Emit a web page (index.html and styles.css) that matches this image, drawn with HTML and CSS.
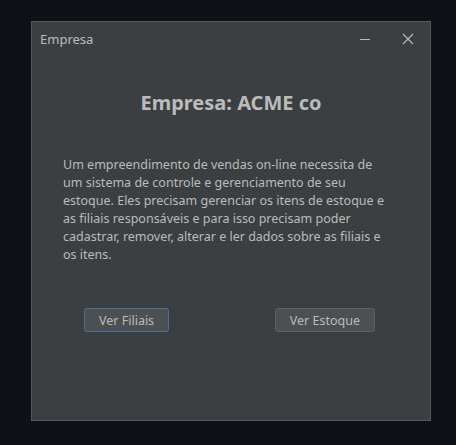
FILE: index.html
```html
<!DOCTYPE html>
<html lang="pt">
<head>
<meta charset="utf-8">
<title>Empresa</title>
<link rel="stylesheet" href="styles.css">
</head>
<body>
<div class="window">
  <div class="titlebar">
    <span class="title">Empresa</span>
    <div class="controls">
      <svg class="ctl" width="12" height="12" viewBox="0 0 12 12"><path d="M1 6.5H11" stroke="#bbbbbb" stroke-width="1"/></svg>
      <svg class="ctl" width="12" height="12" viewBox="0 0 12 12"><path d="M1 1L11 11M11 1L1 11" stroke="#bbbbbb" stroke-width="1.1"/></svg>
    </div>
  </div>
  <div class="content">
    <h1 class="heading">Empresa: ACME co</h1>
    <p class="desc">Um empreendimento de vendas on-line necessita de um sistema de controle e gerenciamento de seu estoque. Eles precisam gerenciar os itens de estoque e as filiais responsáveis e para isso precisam poder cadastrar, remover, alterar e ler dados sobre as filiais e os itens.</p>
    <div class="actions">
      <button class="btn focused">Ver Filiais</button>
      <button class="btn">Ver Estoque</button>
    </div>
  </div>
</div>
</body>
</html>
```
FILE: styles.css
```css
html, body {
  margin: 0;
  padding: 0;
  background: #0f1018;
  height: 100%;
}
body {
  padding: 21px 0 0 31px;
  box-sizing: border-box;
  font-family: "Noto Sans", "Open Sans", sans-serif;
  color: #bbbbbb;
}
.window {
  width: 400px;
  height: 400px;
  box-sizing: border-box;
  border: 1px solid #555759;
  background: #3c3f41;
  display: flex;
  flex-direction: column;
}
.titlebar {
  height: 34px;
  display: flex;
  align-items: center;
  justify-content: space-between;
  padding: 0 16px 0 8px;
}
.title {
  font-size: 13px;
}
.controls {
  display: flex;
  gap: 31px;
  align-items: center;
}
.ctl {
  display: block;
}
.content {
  display: flex;
  flex-direction: column;
  align-items: center;
}
.heading {
  margin: 33px 0 0 0;
  font-size: 20px;
  font-weight: bold;
  line-height: 27px;
}
.desc {
  align-self: flex-start;
  margin: 40px 0 0 31px;
  width: 326px;
  font-size: 12.5px;
  line-height: 18px;
}
.actions {
  align-self: stretch;
  display: flex;
  justify-content: space-between;
  padding: 0 55px 0 52px;
  margin-top: 44px;
}
.btn {
  font-family: "Noto Sans", "Open Sans", sans-serif;
  font-size: 12.5px;
  color: #bbbbbb;
  background: #4c5052;
  border: 1px solid #5e6060;
  border-radius: 3px;
  height: 24px;
  padding: 0 14px;
}
.btn.focused {
  border-color: #4a6f9e;
}
```
